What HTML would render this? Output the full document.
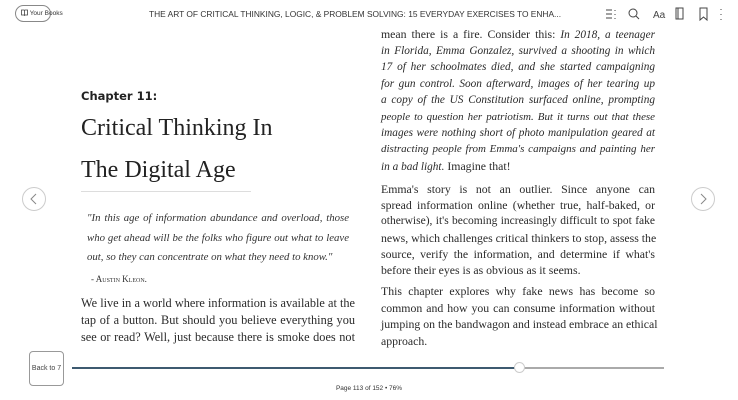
<!DOCTYPE html>
<html><head><meta charset="utf-8"><style>
*{margin:0;padding:0;box-sizing:border-box}
body{width:738px;height:400px;background:#fff;position:relative;overflow:hidden;font-family:"Liberation Serif",serif;color:#2a2a2a}
.l{position:absolute;white-space:nowrap;text-align:justify;text-align-last:justify;font-size:12.3px;line-height:14px}
.r{left:381px;width:274px;font-size:11.8px}
.lf{left:81px;width:274px}
.it{font-size:11.3px;font-style:italic}
.q{left:87px;width:262px;font-style:italic;font-size:10.8px;color:#333}
.last{text-align-last:left}
.hdr{position:absolute;top:9px;font-family:"Liberation Sans",sans-serif;font-size:8.4px;color:#333}
.circ{position:absolute;width:24px;height:24px;border:1px solid #ccc;border-radius:50%;top:187px}
</style></head><body>
<div style="position:absolute;left:15px;top:5px;width:36px;height:17px;border:1px solid #888;border-radius:9px;font-family:'Liberation Sans',sans-serif;font-size:6.5px;line-height:15px;color:#333;white-space:nowrap;background:#fff;padding-left:5px"><svg width="7" height="7" style="vertical-align:-1px" fill="none" stroke="#444" stroke-width="0.8"><path d="M0.5 1h2.5l0.5 0.5l0.5-0.5h2.5v5h-2.5l-0.5 0.5l-0.5-0.5h-2.5z M3.5 1.5v5"/></svg> Your Books</div>
<div class="hdr" style="left:149px">THE ART OF CRITICAL THINKING, LOGIC, &amp; PROBLEM SOLVING: 15 EVERYDAY EXERCISES TO ENHA...</div>
<svg style="position:absolute;left:604px;top:6px" width="120" height="16" fill="none" stroke="#444" stroke-width="1">
<path d="M2 4h6M2 8h6M2 12h6M11 4v1M11 8v1M11 12v1"/>
<circle cx="29" cy="7" r="4"/><path d="M32 10l3 3"/>
<text x="49" y="12" font-family="Liberation Sans" font-size="10" fill="#444" stroke="none">Aa</text>
<rect x="72" y="2" width="7" height="11"/><path d="M74 2v11"/>
<path d="M96 2h7v12l-3.5-3-3.5 3z"/>
<path d="M117 3v1M117 8v1M117 13v1"/>
</svg>
<div class="circ" style="left:22px"><svg width="22" height="22"><path d="M13 6l-5 5 5 5" stroke="#888" fill="none"/></svg></div>
<div class="circ" style="left:691px"><svg width="22" height="22"><path d="M9 6l5 5-5 5" stroke="#888" fill="none"/></svg></div>

<div style="position:absolute;left:81px;top:89px;font-family:'DejaVu Sans',sans-serif;font-weight:bold;font-size:11.5px;color:#222">Chapter 11:</div>
<div style="position:absolute;left:81px;top:115px;font-size:24px;color:#222;white-space:nowrap">Critical Thinking In</div>
<div style="position:absolute;left:81px;top:157px;font-size:24px;color:#222;white-space:nowrap">The Digital Age</div>
<div style="position:absolute;left:81px;top:191px;width:170px;height:1px;background:#ddd"></div>

<div class="l q" style="top:211px">"In this age of information abundance and overload, those</div>
<div class="l q" style="top:231px">who get ahead will be the folks who figure out what to leave</div>
<div class="l q last" style="top:250px">out, so they can concentrate on what they need to know."</div>
<div class="l last" style="left:91px;top:272px;font-size:9px;font-variant:small-caps;color:#333">- Austin Kleon.</div>
<div class="l lf" style="top:296px">We live in a world where information is available at the</div>
<div class="l lf" style="top:313px">tap of a button. But should you believe everything you</div>
<div class="l lf" style="top:330px">see or read? Well, just because there is smoke does not</div>

<div class="l r" style="top:27px">mean there is a fire. Consider this: <i style="font-size:11.3px">In 2018, a teenager</i></div>
<div class="l r it" style="top:44px">in Florida, Emma Gonzalez, survived a shooting in which</div>
<div class="l r it" style="top:60px">17 of her schoolmates died, and she started campaigning</div>
<div class="l r it" style="top:77px">for gun control. Soon afterward, images of her tearing up</div>
<div class="l r it" style="top:93px">a copy of the US Constitution surfaced online, prompting</div>
<div class="l r it" style="top:110px;font-size:10.9px">people to question her patriotism. But it turns out that these</div>
<div class="l r it" style="top:126px">images were nothing short of photo manipulation geared at</div>
<div class="l r it" style="top:142px;font-size:11px">distracting people from Emma's campaigns and painting her</div>
<div class="l r last" style="top:159px"><i style="font-size:11.3px">in a bad light.</i> Imagine that!</div>
<div class="l r" style="top:182px">Emma's story is not an outlier. Since anyone can</div>
<div class="l r" style="top:198px">spread information online (whether true, half-baked, or</div>
<div class="l r" style="top:214px;font-size:11.5px">otherwise), it's becoming increasingly difficult to spot fake</div>
<div class="l r" style="top:231px">news, which challenges critical thinkers to stop, assess the</div>
<div class="l r" style="top:247px">source, verify the information, and determine if what's</div>
<div class="l r last" style="top:263px">before their eyes is as obvious as it seems.</div>
<div class="l r" style="top:284px">This chapter explores why fake news has become so</div>
<div class="l r" style="top:301px">common and how you can consume information without</div>
<div class="l r" style="top:317px">jumping on the bandwagon and instead embrace an ethical</div>
<div class="l r last" style="top:334px">approach.</div>

<div style="position:absolute;left:29px;top:351px;width:35px;height:35px;border:1px solid #999;border-radius:4px;font-family:'Liberation Sans',sans-serif;font-size:7px;line-height:33px;text-align:center;color:#444;background:#fff">Back to 7</div>
<div style="position:absolute;left:72px;top:367px;width:448px;height:2px;background:#3d5a70"></div>
<div style="position:absolute;left:520px;top:367px;width:144px;height:2px;background:#aaa"></div>
<div style="position:absolute;left:514px;top:362px;width:11px;height:11px;border-radius:50%;background:#fff;border:1px solid #ccc"></div>
<div style="position:absolute;left:0;width:738px;top:385px;text-align:center;font-family:'Liberation Sans',sans-serif;font-size:6.5px;color:#333">Page 113 of 152 • 76%</div>
</body></html>
